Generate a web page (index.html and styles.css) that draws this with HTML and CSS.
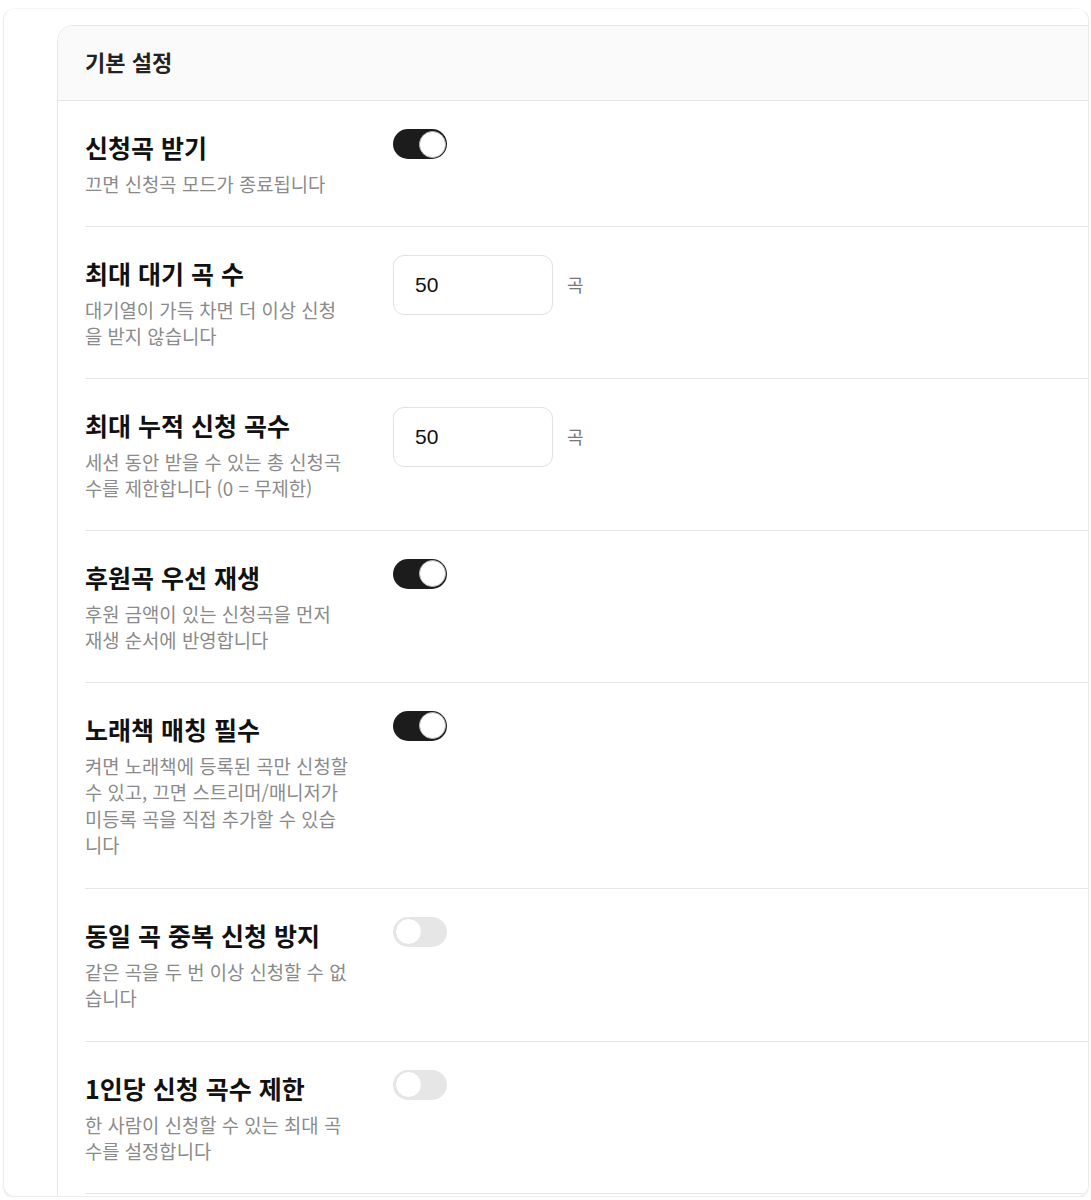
FILE: index.html
```html
<!DOCTYPE html>
<html lang="ko">
<head>
<meta charset="utf-8">
<title>기본 설정</title>
<link rel="stylesheet" href="styles.css">
</head>
<body>
<div class="frame">
  <section class="card">
    <header class="card-header">기본 설정</header>
    <div class="row">
      <div class="label">
        <div class="title">신청곡 받기</div>
        <div class="desc">끄면 신청곡 모드가 종료됩니다</div>
      </div>
      <div class="control"><span class="toggle on"><span class="knob"></span></span></div>
    </div>
    <div class="row">
      <div class="label">
        <div class="title">최대 대기 곡 수</div>
        <div class="desc">대기열이 가득 차면 더 이상 신청을 받지 않습니다</div>
      </div>
      <div class="control"><span class="num-input">50</span><span class="unit">곡</span></div>
    </div>
    <div class="row">
      <div class="label">
        <div class="title">최대 누적 신청 곡수</div>
        <div class="desc">세션 동안 받을 수 있는 총 신청곡 수를 제한합니다 (0 = 무제한)</div>
      </div>
      <div class="control"><span class="num-input">50</span><span class="unit">곡</span></div>
    </div>
    <div class="row">
      <div class="label">
        <div class="title">후원곡 우선 재생</div>
        <div class="desc">후원 금액이 있는 신청곡을 먼저 재생 순서에 반영합니다</div>
      </div>
      <div class="control"><span class="toggle on"><span class="knob"></span></span></div>
    </div>
    <div class="row">
      <div class="label">
        <div class="title">노래책 매칭 필수</div>
        <div class="desc">켜면 노래책에 등록된 곡만 신청할 수 있고, 끄면 스트리머/매니저가 미등록 곡을 직접 추가할 수 있습니다</div>
      </div>
      <div class="control"><span class="toggle on"><span class="knob"></span></span></div>
    </div>
    <div class="row">
      <div class="label">
        <div class="title">동일 곡 중복 신청 방지</div>
        <div class="desc">같은 곡을 두 번 이상 신청할 수 없습니다</div>
      </div>
      <div class="control"><span class="toggle"><span class="knob"></span></span></div>
    </div>
    <div class="row">
      <div class="label">
        <div class="title">1인당 신청 곡수 제한</div>
        <div class="desc">한 사람이 신청할 수 있는 최대 곡 수를 설정합니다</div>
      </div>
      <div class="control"><span class="toggle"><span class="knob"></span></span></div>
    </div>
  </section>
</div>
</body>
</html>
```

FILE: styles.css
```css
html, body {
  margin: 0;
  padding: 0;
  background: #ffffff;
}

body {
  font-family: "Noto Sans CJK KR", "Noto Sans", sans-serif;
  color: #111111;
}

.frame {
  box-sizing: border-box;
  margin: 8px 2px 0 3px;
  height: 1189px;
  border: 1px solid #ececec;
  border-top-color: #f6f6f6;
  border-radius: 12px;
  box-shadow: 0 2px 2px rgba(0, 0, 0, 0.06);
  overflow: hidden;
  padding: 16px 0 0 53px;
  background: #ffffff;
}

.card {
  width: 1120px;
  min-height: 1300px;
  border: 1px solid #e6e6e6;
  border-radius: 16px;
  overflow: hidden;
  background: #ffffff;
}

.card-header {
  background: #fafafa;
  border-bottom: 1px solid #e6e6e6;
  height: 75px;
  box-sizing: border-box;
  padding: 0 27px 5px;
  display: flex;
  align-items: center;
  font-size: 22px;
  font-weight: 600;
  color: #222222;
}

.row {
  margin-left: 27px;
  padding: 30px 0 28px;
  border-bottom: 1px solid #e6e6e6;
  display: grid;
  grid-template-columns: 266px auto;
  column-gap: 42px;
  align-items: start;
}

.row:nth-child(6),
.row:nth-child(7) {
  padding-bottom: 29px;
}

.title {
  font-size: 25px;
  line-height: 32px;
  font-weight: 700;
  color: #111111;
}

.desc {
  margin-top: 8px;
  font-size: 18.8px;
  line-height: 26.5px;
  color: #8a8a8a;
}

.control {
  display: flex;
  align-items: center;
}

.toggle {
  position: relative;
  display: inline-block;
  width: 54px;
  height: 30px;
  margin-top: -2px;
  border-radius: 15px;
  background: #e6e6e6;
}

.toggle.on {
  background: #1c1c1c;
}

.knob {
  position: absolute;
  top: 1.5px;
  left: 1.5px;
  width: 27px;
  height: 27px;
  box-sizing: border-box;
  border-radius: 50%;
  background: #ffffff;
  border: 1px solid #e2e2e2;
}

.toggle.on .knob {
  left: auto;
  right: 1.5px;
  border-color: #b5b5b5;
}

.num-input {
  box-sizing: border-box;
  width: 160px;
  height: 60px;
  margin-top: -2px;
  border: 1px solid #e2e2e2;
  border-radius: 11px;
  padding-left: 21px;
  display: flex;
  align-items: center;
  font-family: "Liberation Sans", Arial, sans-serif;
  font-size: 21px;
  color: #111111;
}

.unit {
  margin-left: 14px;
  margin-top: -3px;
  font-size: 18px;
  color: #777777;
}
```
